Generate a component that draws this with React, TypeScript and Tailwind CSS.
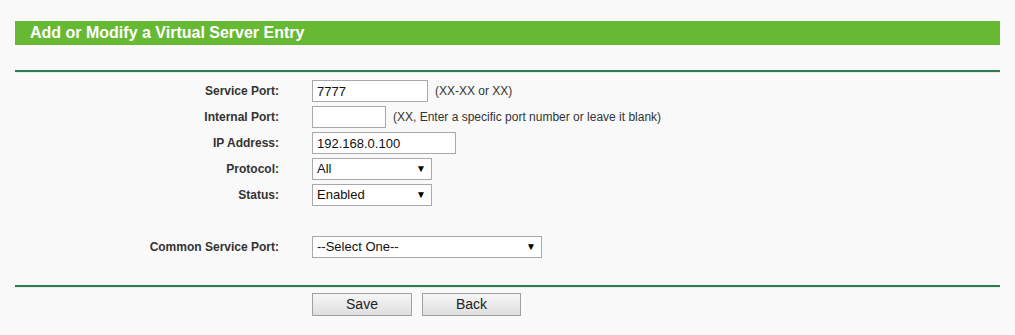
const labelCls =
  "w-[264px] shrink-0 text-right text-[12px] font-bold text-[#333]";
const inputCls =
  "h-[22px] border border-[#a9a9a9] bg-white px-[4px] text-[13px] text-[#111] outline-none";

function SelectBox({ value, width }: { value: string; width: string }) {
  return (
    <div
      className={`flex h-[22px] items-center justify-between border border-[#a9a9a9] bg-white pl-[4px] pr-[5px] text-[13px] text-[#111] ${width}`}
    >
      <span>{value}</span>
      <span className="text-[10px] leading-none text-black">▼</span>
    </div>
  );
}

function Row({ label, children }: { label: string; children: React.ReactNode }) {
  return (
    <div className="flex h-[22px] items-center">
      <div className={labelCls}>{label}</div>
      <div className="ml-[33px] flex items-center">{children}</div>
    </div>
  );
}

function Rule() {
  return (
    <div className="border-t-2 border-[#2f7a50] shadow-[0_1px_0_#e3eee7]" />
  );
}

export default function App() {
  return (
    <div
      className="min-h-[335px] bg-[#f9f9f9] pt-[21px] pr-[15px] pl-[15px]"
      style={{ fontFamily: '"Liberation Sans", Arial, sans-serif' }}
    >
      <div className="flex h-[24px] items-center bg-[#67b934] pl-[15px] text-[16px] font-bold text-white">
        Add or Modify a Virtual Server Entry
      </div>

      <div className="mt-[25px]">
        <Rule />
      </div>

      <div className="mt-[8px] flex flex-col gap-[4px]">
        <Row label="Service Port:">
          <input className={`${inputCls} w-[116px]`} defaultValue="7777" />
          <span className="ml-[7px] text-[12px] text-[#333]">(XX-XX or XX)</span>
        </Row>
        <Row label="Internal Port:">
          <input className={`${inputCls} w-[74px]`} defaultValue="" />
          <span className="ml-[7px] text-[12px] text-[#333]">
            (XX, Enter a specific port number or leave it blank)
          </span>
        </Row>
        <Row label="IP Address:">
          <input className={`${inputCls} w-[144px]`} defaultValue="192.168.0.100" />
        </Row>
        <Row label="Protocol:">
          <SelectBox value="All" width="w-[120px]" />
        </Row>
        <Row label="Status:">
          <SelectBox value="Enabled" width="w-[120px]" />
        </Row>
        <div className="h-[22px]" />
        <Row label="Common Service Port:">
          <SelectBox value="--Select One--" width="w-[230px]" />
        </Row>
      </div>

      <div className="mt-[27px]">
        <Rule />
      </div>

      <div className="mt-[6px] flex gap-[10px] pl-[297px]">
        <button className="h-[23px] w-[100px] border border-[#a0a0a0] bg-gradient-to-b from-[#f6f6f6] to-[#dedede] text-[14px] text-[#222]">
          Save
        </button>
        <button className="h-[23px] w-[99px] border border-[#a0a0a0] bg-gradient-to-b from-[#f6f6f6] to-[#dedede] text-[14px] text-[#222]">
          Back
        </button>
      </div>
    </div>
  );
}
